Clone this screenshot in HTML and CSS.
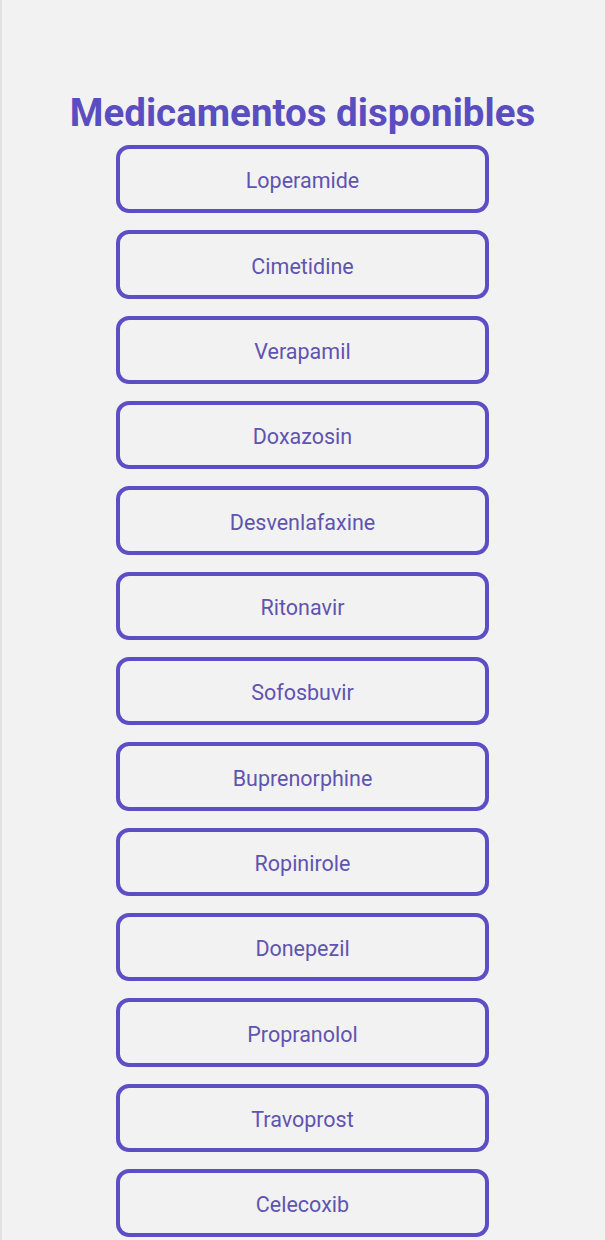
FILE: index.html
```html
<!DOCTYPE html>
<html lang="es">
<head>
<meta charset="utf-8">
<link rel="stylesheet" href="styles.css">
</head>
<body>
<main class="screen">
  <h1 class="title">Medicamentos disponibles</h1>
  <ul class="list">
    <li class="item">Loperamide</li>
    <li class="item">Cimetidine</li>
    <li class="item">Verapamil</li>
    <li class="item">Doxazosin</li>
    <li class="item">Desvenlafaxine</li>
    <li class="item">Ritonavir</li>
    <li class="item">Sofosbuvir</li>
    <li class="item">Buprenorphine</li>
    <li class="item">Ropinirole</li>
    <li class="item">Donepezil</li>
    <li class="item">Propranolol</li>
    <li class="item">Travoprost</li>
    <li class="item">Celecoxib</li>
  </ul>
</main>
</body>
</html>
```
FILE: styles.css
```css
html, body {
  margin: 0;
  padding: 0;
  background: #f2f2f2;
  height: 100%;
  overflow: hidden;
}
.screen {
  box-sizing: border-box;
  min-height: 1240px;
  box-shadow: inset 2px 0 0 #e2e2e2;
  font-family: Roboto, "Liberation Sans", sans-serif;
  display: flex;
  flex-direction: column;
  align-items: center;
  padding-top: 89px;
}
.title {
  margin: 0 0 9px;
  font-size: 38.5px;
  font-weight: 700;
  line-height: 47px;
  color: #5a4dc0;
  letter-spacing: 0;
}
.list {
  list-style: none;
  margin: 0;
  padding: 0;
  display: flex;
  flex-direction: column;
  gap: 17px;
}
.item {
  box-sizing: border-box;
  width: 373px;
  height: 68.35px;
  border: 4px solid #5c4fc6;
  border-radius: 13px;
  display: flex;
  align-items: center;
  justify-content: center;
  padding-top: 3px;
  font-size: 21.5px;
  color: #5f54b0;
}
```
